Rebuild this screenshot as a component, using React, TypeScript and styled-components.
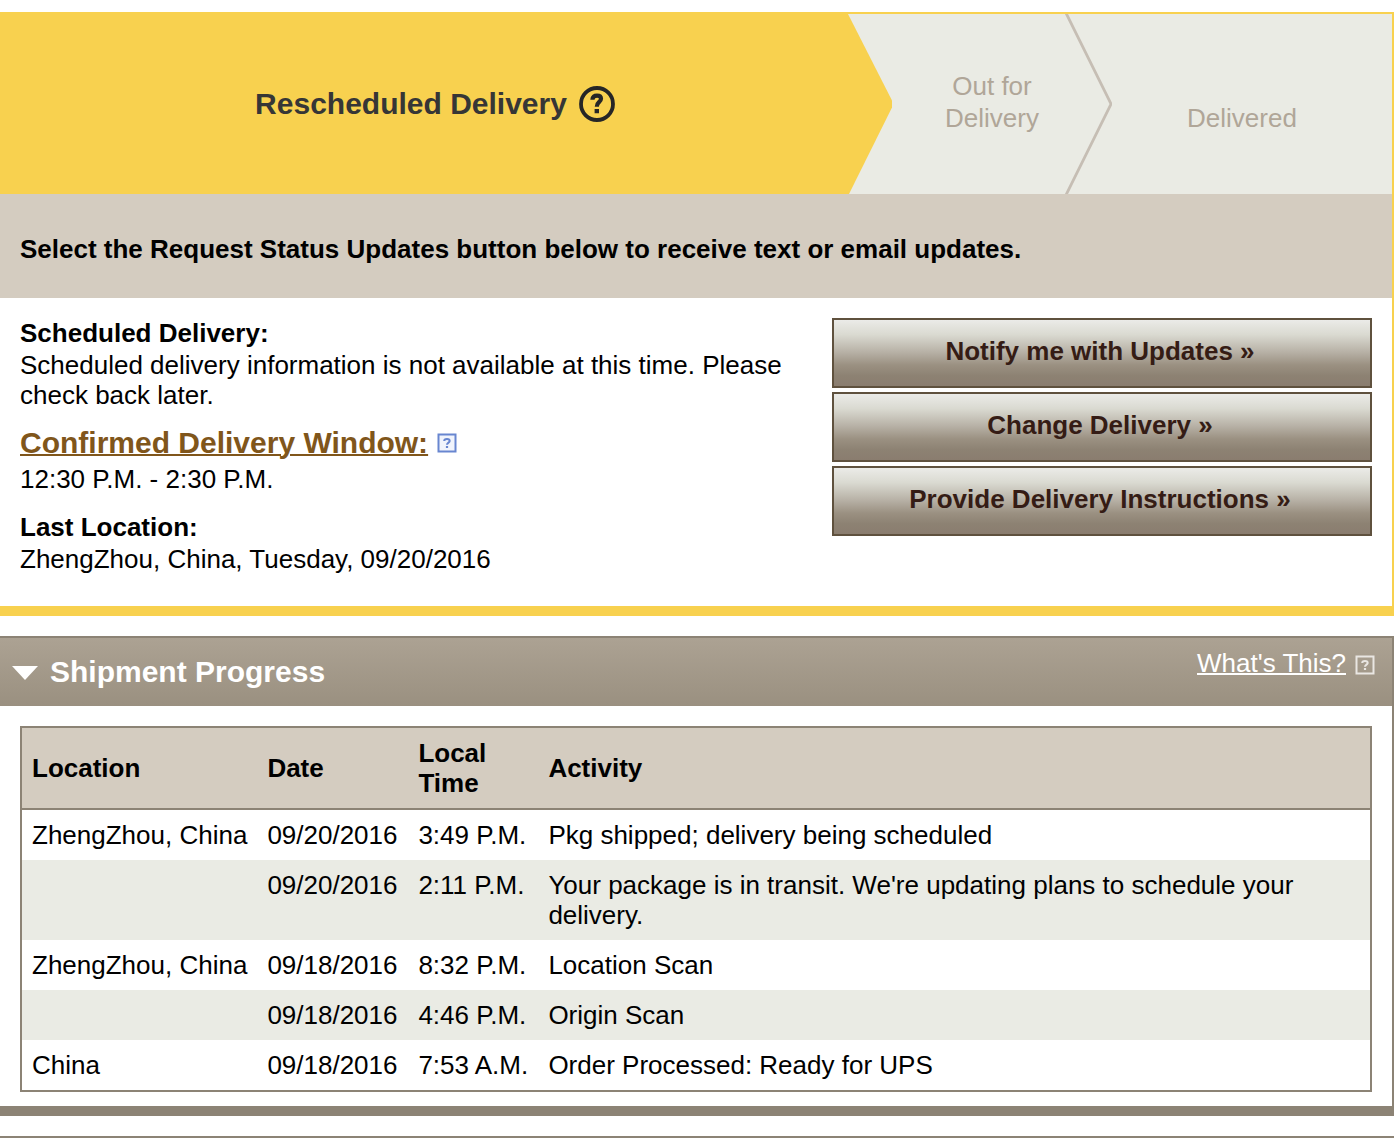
import React, { useState } from "react";
import styled, { createGlobalStyle } from "styled-components";

const yellow = "#f8d14f";
const taupe = "#8c8375";
const sand = "#d4ccc0";
const mist = "#eaebe4";

const GlobalStyle = createGlobalStyle`
  *, *::before, *::after { box-sizing: border-box; }
  body {
    margin: 0;
    background: #fff;
    color: #000;
    font-family: Arial, "Liberation Sans", sans-serif;
    font-size: 26px;
    line-height: 30px;
  }
`;

const Page = styled.main`
  display: flex;
  flex-direction: column;
  gap: 20px;
  padding: 12px 4px 0 0;
`;

const Panel = styled.section<{ $color: string }>`
  border: 2px solid ${(p) => p.$color};
  border-left: 0;
  border-bottom-width: 10px;
`;

const NextPanel = styled.section`
  border-top: 2px solid ${taupe};
`;

const Steps = styled.ol`
  display: flex;
  min-height: 180px;
  margin: 0;
  padding: 0;
  list-style: none;
  background: ${mist};
`;

const CurrentStep = styled.li`
  flex: 1;
  display: flex;
  align-items: center;
  justify-content: center;
  gap: 12px;
  padding-right: 22px;
  background: ${yellow};
  clip-path: polygon(0 0, calc(100% - 44px) 0, 100% 48%, 100% 52%, calc(100% - 43px) 100%, 0 100%);
  color: #363636;
  font-size: 30px;
  font-weight: bold;
  line-height: 34px;
`;

const Step = styled.li<{ $width: number }>`
  position: relative;
  flex: 0 0 ${(p) => p.$width}px;
  display: flex;
  align-items: flex-end;
  justify-content: center;
  padding: 0 20px 60px 0;
  color: #b0a698;
  line-height: 32px;
  text-align: center;
`;

const StepLabel = styled.span`
  max-width: 120px;
`;

const Chevron = styled.svg`
  position: absolute;
  top: 0;
  right: 0;
  width: 48px;
  height: 100%;
`;

const Banner = styled.p`
  margin: 0;
  padding: 40px 20px 34px;
  background: ${sand};
  font-weight: bold;
`;

const Summary = styled.div`
  display: grid;
  grid-template-columns: 1fr 540px;
  gap: 20px;
  padding: 20px 20px 32px;
`;

const Details = styled.dl`
  display: flex;
  flex-direction: column;
  gap: 18px;
  margin: 0;
`;

const Term = styled.dt`
  font-weight: bold;
`;

const WindowTerm = styled(Term)`
  display: flex;
  align-items: center;
  gap: 9px;
  padding-bottom: 4px;
  font-size: 30px;
`;

const Description = styled.dd`
  margin: 2px 0 0;
`;

const WindowLink = styled.a`
  color: #80561b;
  text-decoration: underline;
  text-decoration-thickness: 2px;
`;

const Actions = styled.div`
  display: flex;
  flex-direction: column;
  gap: 4px;
`;

const ActionButton = styled.button`
  height: 70px;
  padding: 0 4px 4px 0;
  border: 2px solid #5f513e;
  background: linear-gradient(
    #ebebe8 0%,
    #dadad1 22%,
    #b8b2a7 48%,
    #9b9182 68%,
    #8d8273 84%,
    #8a7d6f 100%
  );
  color: #351c15;
  font: bold 26px/30px Arial, "Liberation Sans", sans-serif;
  text-align: center;
  cursor: pointer;
`;

const PanelHeader = styled.header`
  display: flex;
  align-items: flex-start;
  justify-content: space-between;
  min-height: 68px;
  padding: 10px 17px 0 12px;
  background: linear-gradient(#aca293, #9a9080);
  color: #fff;
`;

const PanelTitle = styled.h2`
  margin: 0;
  padding-top: 7px;
  font-size: 30px;
  line-height: 34px;
`;

const Toggle = styled.button`
  display: flex;
  align-items: center;
  gap: 12px;
  padding: 0;
  border: 0;
  background: none;
  color: inherit;
  font: inherit;
  cursor: pointer;
`;

const HelpGroup = styled.div`
  display: flex;
  align-items: center;
  gap: 9px;

  svg {
    margin-top: 4px;
  }
`;

const HelpLink = styled.a`
  color: #fff;
  text-decoration: underline;
  text-decoration-thickness: 2px;
`;

const PanelBody = styled.div`
  padding: 20px 20px 14px;
`;

const ProgressTable = styled.table`
  width: 100%;
  border: 2px solid ${taupe};
  border-spacing: 0;
  text-align: left;
`;

const HeadCell = styled.th<{ $width?: number }>`
  width: ${(p) => (p.$width ? `${p.$width}px` : "auto")};
  padding: 10px;
  border-bottom: 2px solid ${taupe};
  background: ${sand};
`;

const Row = styled.tr`
  &:nth-child(even) {
    background: ${mist};
  }
`;

const Cell = styled.td<{ $wrap?: boolean }>`
  padding: 10px;
  vertical-align: top;
  white-space: ${(p) => (p.$wrap ? "normal" : "nowrap")};
`;

const CircleHelpIcon = () => (
  <svg width="36" height="36" viewBox="0 0 36 36" fill="none" stroke="#262626" role="img" aria-label="Help">
    <circle cx="18" cy="18" r="16" strokeWidth="3.8" />
    <path d="M13.4 13.8 C13.4 10.8 15.2 9.7 18 9.7 C20.8 9.7 22 11.2 22 12.8 C22 16.2 17.8 15.8 17.8 20.8" strokeWidth="4.2" />
    <path d="M17.8 23 V27.2" strokeWidth="4.4" />
  </svg>
);

const BoxHelpIcon = ({ color, fill }: { color: string; fill: string }) => (
  <svg width="20" height="20" viewBox="0 0 20 20" fill="none" stroke={color} role="img" aria-label="Help">
    <rect x="1.5" y="1.5" width="17" height="17" fill={fill} strokeWidth="2" />
    <path d="M7.2 8 C7.2 6.4 8.4 6 10 6 C11.8 6 12.7 6.7 12.7 7.9 C12.7 9.6 10 9.6 10 11.8" strokeWidth="2" />
    <path d="M10 13 V15" strokeWidth="2.2" />
  </svg>
);

const TriangleIcon = () => (
  <svg width="26" height="15" viewBox="0 0 26 15" fill="#fff" aria-hidden="true">
    <path d="M0 1 H26 L13 15 Z" />
  </svg>
);

const actions = ["Notify me with Updates »", "Change Delivery »", "Provide Delivery Instructions »"];

const events = [
  { place: "ZhengZhou, China", date: "09/20/2016", time: "3:49 P.M.", activity: "Pkg shipped; delivery being scheduled" },
  {
    place: "",
    date: "09/20/2016",
    time: "2:11 P.M.",
    activity: "Your package is in transit. We're updating plans to schedule your delivery.",
  },
  { place: "ZhengZhou, China", date: "09/18/2016", time: "8:32 P.M.", activity: "Location Scan" },
  { place: "", date: "09/18/2016", time: "4:46 P.M.", activity: "Origin Scan" },
  { place: "China", date: "09/18/2016", time: "7:53 A.M.", activity: "Order Processed: Ready for UPS" },
];

export default function App() {
  const [open, setOpen] = useState(true);

  return (
    <>
      <GlobalStyle />
      <Page>
        <Panel $color={yellow}>
          <Steps>
            <CurrentStep aria-current="step">
              Rescheduled Delivery
              <CircleHelpIcon />
            </CurrentStep>
            <Step $width={220}>
              <StepLabel>Out for Delivery</StepLabel>
              <Chevron viewBox="0 0 48 180" preserveAspectRatio="none" fill="none" stroke="#c6beb4" aria-hidden="true">
                <path d="M2 -1 L47 90 L2 181" strokeWidth="2.8" />
              </Chevron>
            </Step>
            <Step $width={280}>
              <StepLabel>Delivered</StepLabel>
            </Step>
          </Steps>
          <Banner>Select the Request Status Updates button below to receive text or email updates.</Banner>
          <Summary>
            <Details>
              <div>
                <Term>Scheduled Delivery:</Term>
                <Description>
                  Scheduled delivery information is not available at this time. Please check back later.
                </Description>
              </div>
              <div>
                <WindowTerm>
                  <WindowLink href="#delivery-window">Confirmed Delivery Window:</WindowLink>
                  <BoxHelpIcon color="#6886d0" fill="#f1f4fc" />
                </WindowTerm>
                <Description>12:30 P.M. - 2:30 P.M.</Description>
              </div>
              <div>
                <Term>Last Location:</Term>
                <Description>ZhengZhou, China, Tuesday, 09/20/2016</Description>
              </div>
            </Details>
            <Actions>
              {actions.map((label) => (
                <ActionButton key={label} type="button">
                  {label}
                </ActionButton>
              ))}
            </Actions>
          </Summary>
        </Panel>

        <Panel $color={taupe}>
          <PanelHeader>
            <PanelTitle>
              <Toggle type="button" aria-expanded={open} onClick={() => setOpen(!open)}>
                <TriangleIcon />
                Shipment Progress
              </Toggle>
            </PanelTitle>
            <HelpGroup>
              <HelpLink href="#whats-this">What's This?</HelpLink>
              <BoxHelpIcon color="#e9e6e2" fill="none" />
            </HelpGroup>
          </PanelHeader>
          {open && (
            <PanelBody>
              <ProgressTable>
                <thead>
                  <tr>
                    <HeadCell $width={235}>Location</HeadCell>
                    <HeadCell $width={151}>Date</HeadCell>
                    <HeadCell $width={130}>Local Time</HeadCell>
                    <HeadCell>Activity</HeadCell>
                  </tr>
                </thead>
                <tbody>
                  {events.map((e) => (
                    <Row key={e.date + e.time}>
                      <Cell>{e.place}</Cell>
                      <Cell>{e.date}</Cell>
                      <Cell>{e.time}</Cell>
                      <Cell $wrap>{e.activity}</Cell>
                    </Row>
                  ))}
                </tbody>
              </ProgressTable>
            </PanelBody>
          )}
        </Panel>

        <NextPanel />
      </Page>
    </>
  );
}
